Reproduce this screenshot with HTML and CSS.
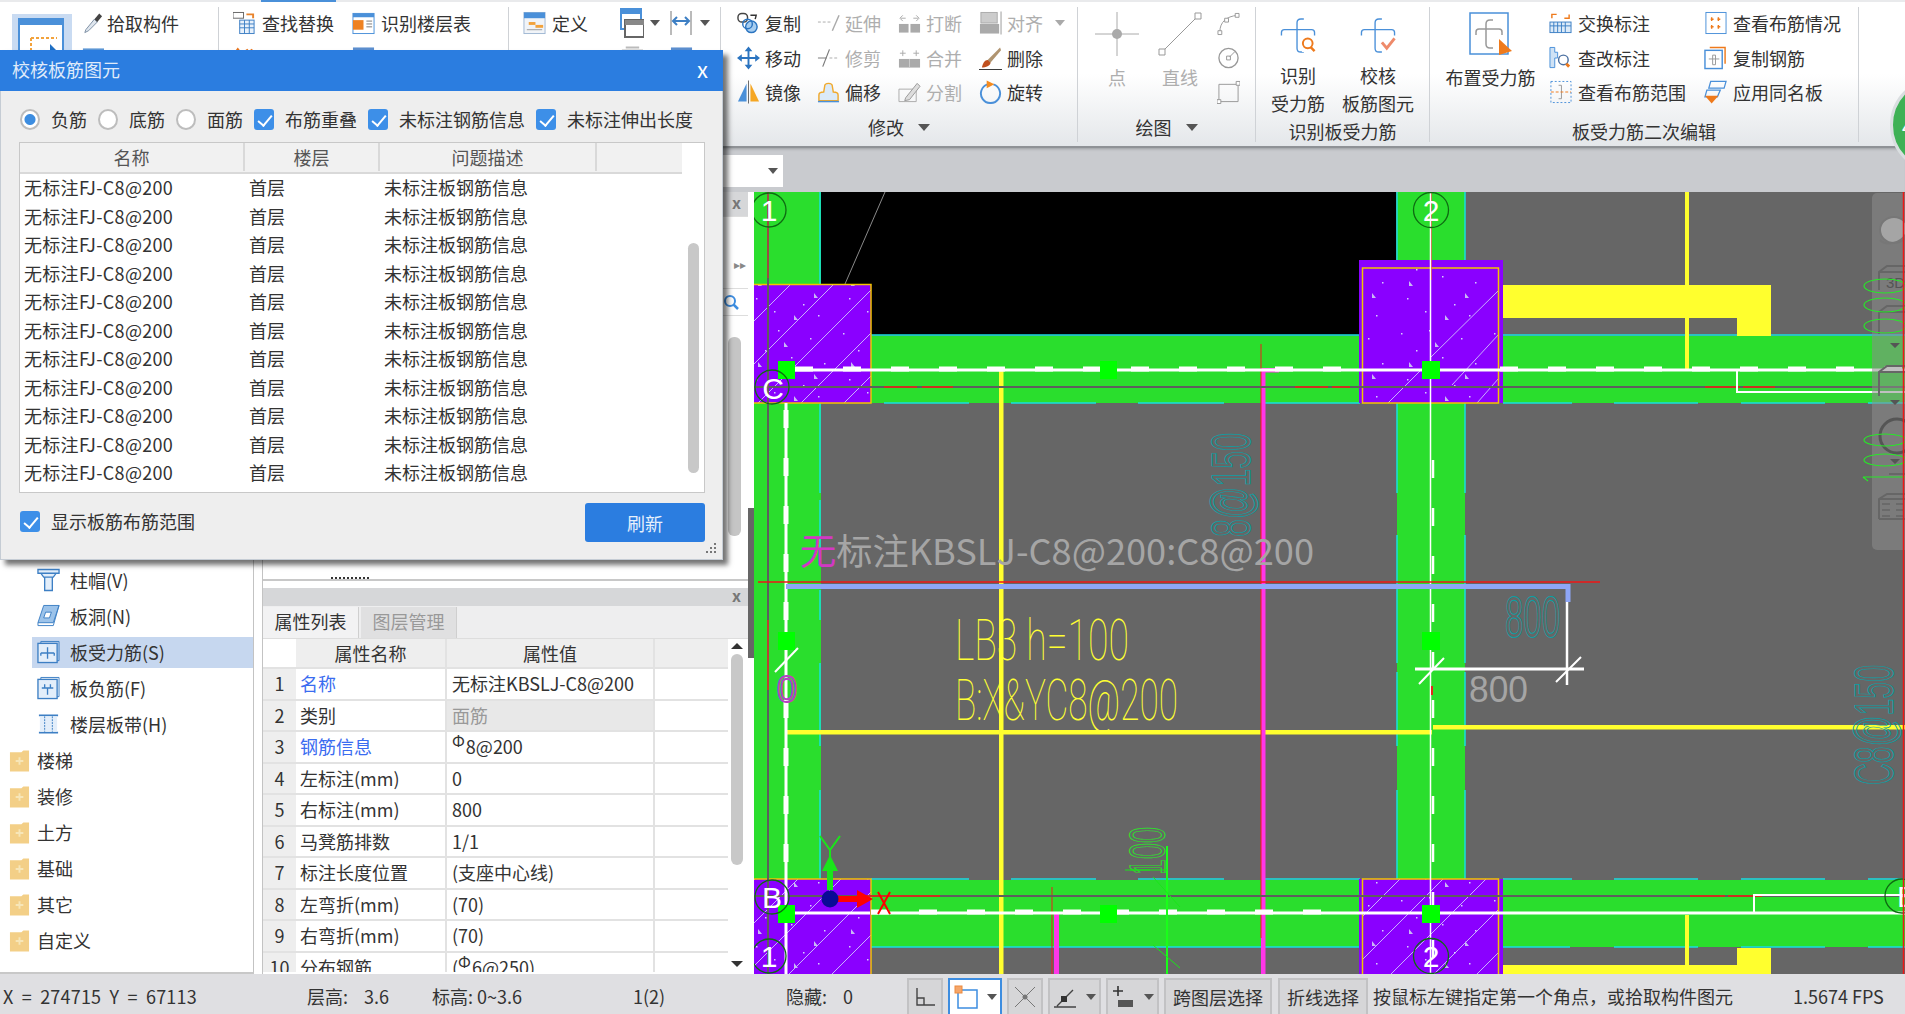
FILE: index.html
```html
<!DOCTYPE html>
<html lang="zh-CN">
<head>
<meta charset="utf-8">
<title>校核板筋图元</title>
<link rel="stylesheet" href="styles.css">
</head>
<body>
<div class="app">

  <header class="ribbon">
    <section class="rb-group g0">
      <div class="rb-body g0-body">
        <div class="tile-active">
          <svg class="tile-svg" viewBox="0 0 60 40"><rect x="7" y="5" width="44" height="50" fill="#fff" stroke="#4a90d9" stroke-width="2"/><rect x="7" y="5" width="44" height="6" fill="#4a90d9"/><path d="M19 24V50M19 24H45" fill="none" stroke="#f2a23c" stroke-width="2" stroke-dasharray="3 2"/><path d="M38 30L50 42V50H38Z" fill="#1f6fc4"/></svg>
        </div>
        <div class="g0-col">
          <div class="rb-item"><svg class="ic" viewBox="0 0 24 24"><path d="M5 19L14 8l3 3-9 9-4 2z" fill="#dfe6ee" stroke="#7c8ea3"/><path d="M14 8l5-6 3 3-5 6z" fill="#444"/></svg><span>拾取构件</span></div>
          <div class="rb-item"><svg class="ic" viewBox="0 0 24 24"><rect x="2" y="2" width="22" height="18" fill="#5c97d6"/></svg></div>
        </div>
      </div>
    </section>
    <section class="rb-group g1">
      <div class="rb-body g1-body">
        <div class="rb-item"><svg class="ic" viewBox="0 0 24 24"><rect x="7" y="9" width="15" height="14" fill="#e8f1fb" stroke="#3d7fc4"/><path d="M7 13h15M7 17h15M12 9v14M17 9v14" stroke="#3d7fc4"/><rect x="0" y="1" width="11" height="6" fill="#fff" stroke="#666"/><path d="M14 3h7v4" fill="none" stroke="#e8832c" stroke-width="2"/></svg><span>查找替换</span></div>
        <div class="rb-item"><svg class="ic" viewBox="0 0 24 24"><rect x="1" y="2" width="22" height="21" fill="#fff" stroke="#4a90d9"/><rect x="1" y="2" width="22" height="4" fill="#4a90d9"/><rect x="1" y="9" width="11" height="10" fill="#ee8121"/><path d="M15 10h6M15 13h6M15 16h6" stroke="#777"/></svg><span>识别楼层表</span></div>
        <div class="rb-item"><svg class="ic" viewBox="0 0 24 24"><path d="M2 7l3-4 3 4M14 3l3 4 3-4" fill="none" stroke="#e8731c" stroke-width="2.5"/></svg></div>
        <div class="rb-item"><svg class="ic" viewBox="0 0 24 24"><rect x="1" y="1" width="22" height="22" fill="#5c8fcf"/></svg></div>
      </div>
    </section>
    <section class="rb-group g2">
      <div class="rb-body g2-body">
        <div class="rb-item w-def"><svg class="ic" viewBox="0 0 24 24"><rect x="1" y="1" width="22" height="22" fill="#f1f4f8" stroke="#9fb7d3"/><rect x="1" y="1" width="22" height="6" fill="#4a90d9"/><rect x="6" y="11" width="7" height="3" fill="#f2a23c"/><rect x="13" y="14" width="8" height="3" fill="#f2a23c"/><path d="M4 19h16" stroke="#999"/></svg><span>定义</span></div>
        <div class="rb-item w-split"><svg class="ic-w" viewBox="0 0 24 30"><rect x="1" y="1" width="20" height="20" fill="#fff" stroke="#4a90d9" stroke-width="2"/><rect x="1" y="1" width="20" height="5" fill="#4a90d9"/><rect x="5" y="12" width="19" height="17" fill="#fff" stroke="#666" stroke-width="2"/><rect x="5" y="12" width="19" height="5" fill="#888"/></svg><i class="caret"></i></div>
        <div class="rb-item"><svg class="ic-w" viewBox="0 0 24 30"><path d="M1 3v24M21 3v24" stroke="#777"/><path d="M4 13h14M7 9l-4 4 4 4M15 9l4 4-4 4" fill="none" stroke="#3d7fc4" stroke-width="2"/></svg><i class="caret"></i></div>
        <div class="rb-item w-def"></div>
        <div class="rb-item w-split"><svg class="ic" viewBox="0 0 24 24"><path d="M2 4h22M6 1h14" stroke="#bbb" stroke-width="2"/></svg></div>
        <div class="rb-item"><svg class="ic" viewBox="0 0 24 24"><rect x="1" y="1" width="22" height="23" fill="#5c8fcf"/></svg></div>
      </div>
    </section>
    <section class="rb-group g3">
      <div class="rb-body g3-body">
        <div class="rb-item"><svg class="ic" viewBox="0 0 24 24"><rect x="1" y="2" width="10" height="9" rx="4" fill="none" stroke="#444" stroke-width="1.5"/><circle cx="15" cy="16" r="6" fill="#a6cdf0" stroke="#2b74c0" stroke-width="1.5"/><circle cx="11" cy="13" r="5" fill="none" stroke="#2b74c0" stroke-width="1.5"/><path d="M14 4h6l-1 4" fill="none" stroke="#333" stroke-width="1.5"/></svg><span>复制</span></div>
        <div class="rb-item off"><svg class="ic" viewBox="0 0 24 24"><path d="M1 11h15" stroke="#aaa" stroke-dasharray="3 2"/><path d="M16 20L23 4" stroke="#aaa" stroke-width="1.5"/></svg><span>延伸</span></div>
        <div class="rb-item off"><svg class="ic" viewBox="0 0 24 24"><rect x="1" y="13" width="10" height="9" fill="#aaa"/><rect x="13" y="13" width="10" height="9" fill="#aaa"/><path d="M3 7h5M5 4l-3 3 3 3M16 7h5M19 4l3 3-3 3" fill="none" stroke="#aaa"/></svg><span>打断</span></div>
        <div class="rb-item off"><svg class="ic" viewBox="0 0 24 24"><rect x="2" y="1" width="17" height="11" fill="#ccc" stroke="#aaa"/><rect x="1" y="13" width="20" height="10" fill="#aaa"/><path d="M23 0v24" stroke="#999"/></svg><span>对齐</span><i class="caret caret--off"></i></div>

        <div class="rb-item"><svg class="ic" viewBox="0 0 24 24"><path d="M12 3v18M3 12h18" stroke="#2b74c0" stroke-width="2"/><path d="M12 0l4 5H8zM12 24l4-5H8zM0 12l5-4v8zM24 12l-5-4v8z" fill="#2b74c0"/></svg><span>移动</span></div>
        <div class="rb-item off"><svg class="ic" viewBox="0 0 24 24"><path d="M1 12h9" stroke="#777"/><path d="M6 21L13 3" stroke="#777" stroke-width="1.2"/><path d="M13 12h10" stroke="#aaa" stroke-dasharray="3 2"/></svg><span>修剪</span></div>
        <div class="rb-item off"><svg class="ic" viewBox="0 0 24 24"><rect x="1" y="13" width="22" height="9" fill="#aaa"/><path d="M12 13v9" stroke="#ccc"/><path d="M2 7h6M5 4v6M16 7h6M19 4v6" stroke="#aaa"/></svg><span>合并</span></div>
        <div class="rb-item"><svg class="ic" viewBox="0 0 24 24"><path d="M8 15L22 1l1 3L11 18z" fill="#b09470"/><path d="M3 22c1-5 3-8 6-8l3 3c0 3-5 5-9 5z" fill="#c0501f"/><path d="M0 24h24" stroke="#333"/></svg><span>删除</span></div>

        <div class="rb-item"><svg class="ic" viewBox="0 0 24 24"><path d="M1 22L10 3v19z" fill="#4a90d9"/><path d="M14 3l9 19h-9z" fill="#f5a623"/><path d="M12 0v24" stroke="#666"/></svg><span>镜像</span></div>
        <div class="rb-item"><svg class="ic" viewBox="0 0 24 24"><path d="M2 21v-6c0-2 2-3 5-3l1-6c0-4 8-4 8 0l1 6c3 0 5 1 5 3v6z" fill="#dbeaf8" stroke="#f0a92c" stroke-width="1.5"/><path d="M1 22h22" stroke="#4a90d9" stroke-width="1.5"/></svg><span>偏移</span></div>
        <div class="rb-item off"><svg class="ic" viewBox="0 0 24 24"><path d="M1 9h18v13H1z" fill="none" stroke="#aaa"/><path d="M8 18L20 3l3 3-11 14-5 1z" fill="#ddd" stroke="#999"/></svg><span>分割</span></div>
        <div class="rb-item"><svg class="ic" viewBox="0 0 24 24"><path d="M15 4a10 10 0 1 1-6 0" fill="none" stroke="#4a90d9" stroke-width="2"/><path d="M8 0l8 4-8 4z" fill="#f58b1f"/></svg><span>旋转</span></div>
      </div>
      <div class="rb-label"><span>修改</span><i class="caret caret--label"></i></div>
    </section>
    <section class="rb-group g4">
      <div class="rb-body g4-body">
        <div class="big big--pt off"><svg class="ic-big" viewBox="0 0 44 44"><path d="M22 0v44M0 22h44" stroke="#aaa"/><circle cx="22" cy="22" r="5" fill="#aaa"/></svg><span>点</span></div>
        <div class="big big--line off"><svg class="ic-big" viewBox="0 0 44 44"><path d="M4 40L40 4" stroke="#999"/><path d="M1 37h6v6H1zM37 1h6v6h-6z" fill="#fff" stroke="#999"/></svg><span>直线</span></div>
        <div class="minis">
          <svg class="ic" viewBox="0 0 24 24"><path d="M3 20C3 10 10 4 21 3" fill="none" stroke="#999"/><path d="M1 19h4v4H1zM19 1h4v4h-4zM8 6h4v4H8z" fill="#fff" stroke="#999"/></svg>
          <svg class="ic" viewBox="0 0 24 24"><circle cx="12" cy="12" r="10" fill="none" stroke="#999" stroke-width="1.4"/><path d="M10 10h4v4h-4z" fill="#fff" stroke="#999"/><path d="M13 11l6-6" stroke="#999"/></svg>
          <svg class="ic" viewBox="0 0 24 24"><path d="M2 4h20v18H2z" fill="none" stroke="#999"/><path d="M0 20h4v4H0zM20 1h4v4h-4z" fill="#fff" stroke="#999"/></svg>
        </div>
      </div>
      <div class="rb-label"><span>绘图</span><i class="caret caret--label"></i></div>
    </section>
    <section class="rb-group g5">
      <div class="rb-body g5-body">
        <div class="big big--rec"><svg class="ic-rec" viewBox="0 0 40 38"><path d="M26 2h-3c-3 0-4 1-4 4v26c0 3 1 4 4 4h3M3 19v-3c0-2 1-3 3-3h28c2 0 3 1 3 3v3" fill="none" stroke="#4a90d9" stroke-width="1.4"/><rect x="24" y="21" width="16" height="15" fill="#fff"/><circle cx="30" cy="27" r="5" fill="none" stroke="#ee7a1c" stroke-width="2"/><path d="M33 31l4 4" stroke="#ee7a1c" stroke-width="2.5"/></svg><span>识别<br>受力筋</span></div>
        <div class="big big--chk"><svg class="ic-rec" viewBox="0 0 40 38"><path d="M24 2h-3c-3 0-4 1-4 4v26c0 3 1 4 4 4h3M3 19v-3c0-2 1-3 3-3h28c2 0 3 1 3 3v3" fill="none" stroke="#4a90d9" stroke-width="1.4"/><path d="M24 26l5 6 8-10" fill="none" stroke="#ee8a6a" stroke-width="3"/></svg><span>校核<br>板筋图元</span></div>
      </div>
      <div class="rb-label rb-label--low"><span>识别板受力筋</span></div>
    </section>
    <section class="rb-group g6">
      <div class="rb-body g6-body">
        <div class="big big--set"><svg class="ic-set" viewBox="0 0 44 44"><rect x="1" y="1" width="38" height="41" fill="#fff" stroke="#4a90d9" stroke-width="1.5"/><path d="M24 8h-3c-3 0-4 1-4 4v20c0 3 1 4 4 4h3M7 23v-3c0-2 1-3 3-3h20c2 0 3 1 3 3v3" fill="none" stroke="#999" stroke-width="1.5"/><path d="M30 27l13 12-13 4z" fill="#ee7a1c"/></svg><span>布置受力筋</span></div>
        <div class="g6-grid">
          <div class="rb-item"><svg class="ic" viewBox="0 0 24 24"><rect x="1" y="11" width="22" height="11" fill="#dbeaf8" stroke="#3d7fc4"/><path d="M5 11v11M9 11v11M13 11v11M17 11v11M1 15h22" stroke="#3d7fc4"/><path d="M3 7V3h5M21 3v4h-5" fill="none" stroke="#ee7a1c" stroke-width="1.5"/></svg><span>交换标注</span></div>
          <div class="rb-item"><svg class="ic" viewBox="0 0 24 24"><rect x="2" y="1" width="21" height="22" fill="#fff" stroke="#4a90d9"/><path d="M7 8h3M14 8h3M7 16h3M14 16h3M8 6v4M15 6v4M8 14v4M15 14v4" stroke="#ee7a1c" stroke-width="1.5"/></svg><span>查看布筋情况</span></div>
          <div class="rb-item"><svg class="ic" viewBox="0 0 24 24"><path d="M1 1h5v5h3v6H6v10H1z" fill="#cfe2f5" stroke="#4a90d9"/><circle cx="15" cy="14" r="5" fill="#fff" stroke="#4a6fa0" stroke-width="1.5"/><path d="M18 18l3 3" stroke="#ee7a1c" stroke-width="3"/></svg><span>查改标注</span></div>
          <div class="rb-item"><svg class="ic" viewBox="0 0 24 24"><path d="M6 1h16v17" fill="none" stroke="#ee7a1c" stroke-width="1.5"/><rect x="1" y="4" width="18" height="19" fill="#fff" stroke="#4a90d9" stroke-width="1.5"/><path d="M9 9h3v10H9zM5 13h11" fill="none" stroke="#999"/></svg><span>复制钢筋</span></div>
          <div class="rb-item"><svg class="ic" viewBox="0 0 24 24"><rect x="2" y="1" width="21" height="22" fill="none" stroke="#4a90d9" stroke-dasharray="2 2"/><path d="M10 5h3v14h-3" fill="none" stroke="#999"/><path d="M2 12h21" stroke="#ee7a1c" stroke-dasharray="3 2"/></svg><span>查看布筋范围</span></div>
          <div class="rb-item"><svg class="ic" viewBox="0 0 24 24"><path d="M7 1h16l-2 7H5zM3 10h14l-3 7H1z" fill="none" stroke="#4a90d9" stroke-width="1.3"/><path d="M1 16h14l-7 8z" fill="#ee7a1c"/></svg><span>应用同名板</span></div>
        </div>
      </div>
      <div class="rb-label rb-label--low"><span>板受力筋二次编辑</span></div>
    </section>
  </header>

  <div class="toolstrip">
    <div class="combo"><i class="caret"></i></div>
  </div>

  <main class="work">
    <nav class="tree">
      <div class="tree-row child"><svg class="ic" viewBox="0 0 24 24"><path d="M1 1h22v4H1zM4 5h16l-3 4H7zM8 9h8v14H8z" fill="#e3eefa" stroke="#3d7fc4" stroke-width="1.4"/></svg><span>柱帽(V)</span></div>
      <div class="tree-row child"><svg class="ic" viewBox="0 0 24 24"><path d="M7 1h16l-6 18H1z" fill="#9cc3ea" stroke="#3d7fc4"/><path d="M9 8h6l-2 6H7z" fill="#fff" stroke="#3d7fc4"/><path d="M1 19v3h16l6-21" fill="none" stroke="#3d7fc4"/></svg><span>板洞(N)</span></div>
      <div class="tree-row child selected"><svg class="ic" viewBox="0 0 24 24"><rect x="1" y="3" width="20" height="20" fill="#e3eefa" stroke="#3d7fc4" stroke-width="1.4"/><path d="M4 3V1h19v20h-2" fill="none" stroke="#3d7fc4"/><path d="M11 7v12M4 13h14M4 13v3M18 13v3" fill="none" stroke="#3d7fc4" stroke-width="1.4"/></svg><span>板受力筋(S)</span></div>
      <div class="tree-row child"><svg class="ic" viewBox="0 0 24 24"><rect x="1" y="3" width="20" height="20" fill="#e3eefa" stroke="#3d7fc4" stroke-width="1.4"/><path d="M4 3V1h19v20h-2" fill="none" stroke="#3d7fc4"/><path d="M6 12h11M8 8v4h-3M14 8v4h3M11 12v7" fill="none" stroke="#3d7fc4" stroke-width="1.4"/></svg><span>板负筋(F)</span></div>
      <div class="tree-row child"><svg class="ic" viewBox="0 0 24 24"><path d="M2 3h20M2 21h20" stroke="#3d7fc4" stroke-width="2"/><rect x="3" y="4" width="18" height="16" fill="#e3eefa"/><path d="M8 4v16M16 4v16" stroke="#3d7fc4" stroke-dasharray="2 1"/></svg><span>楼层板带(H)</span></div>
      <div class="tree-row"><svg class="ic folder" viewBox="0 0 22 24"><path d="M1 4h12l2-2h6v22H1z" fill="#f3cf87"/><path d="M7 13h8M11 9v8" stroke="#f7e6b8" stroke-width="2"/></svg><span>楼梯</span></div>
      <div class="tree-row"><svg class="ic folder" viewBox="0 0 22 24"><path d="M1 4h12l2-2h6v22H1z" fill="#f3cf87"/><path d="M7 13h8M11 9v8" stroke="#f7e6b8" stroke-width="2"/></svg><span>装修</span></div>
      <div class="tree-row"><svg class="ic folder" viewBox="0 0 22 24"><path d="M1 4h12l2-2h6v22H1z" fill="#f3cf87"/><path d="M7 13h8M11 9v8" stroke="#f7e6b8" stroke-width="2"/></svg><span>土方</span></div>
      <div class="tree-row"><svg class="ic folder" viewBox="0 0 22 24"><path d="M1 4h12l2-2h6v22H1z" fill="#f3cf87"/><path d="M7 13h8M11 9v8" stroke="#f7e6b8" stroke-width="2"/></svg><span>基础</span></div>
      <div class="tree-row"><svg class="ic folder" viewBox="0 0 22 24"><path d="M1 4h12l2-2h6v22H1z" fill="#f3cf87"/><path d="M7 13h8M11 9v8" stroke="#f7e6b8" stroke-width="2"/></svg><span>其它</span></div>
      <div class="tree-row"><svg class="ic folder" viewBox="0 0 22 24"><path d="M1 4h12l2-2h6v22H1z" fill="#f3cf87"/><path d="M7 13h8M11 9v8" stroke="#f7e6b8" stroke-width="2"/></svg><span>自定义</span></div>
    </nav>

    <div class="mid">
      <section class="list-panel">
        <div class="panel-head"><span class="panel-x">x</span></div>
        <div class="list-tools"><span class="chev">▸▸</span></div>
        <div class="list-search"><svg class="search" viewBox="0 0 16 16"><circle cx="7" cy="7" r="5" fill="none" stroke="#3d8de0" stroke-width="2"/><path d="M10.5 10.5L15 15" stroke="#3d8de0" stroke-width="2.5"/></svg></div>
        <div class="list-body">
          <div class="list-thumb"></div>
          <div class="list-stub"><i class="stub-bit"></i></div>
        </div>
      </section>
      <section class="prop-panel">
        <div class="panel-head panel-head--prop"><span class="panel-x">x</span></div>
        <div class="tabs"><div class="tab tab--on">属性列表</div><div class="tab">图层管理</div></div>
        <div class="prop-body">
          <div class="prop-table">
            <div class="prop-row prop-head"><div class="c0"></div><div class="c1">属性名称</div><div class="c2">属性值</div></div>
            <div class="prop-row"><div class="c0">1</div><div class="c1 link">名称</div><div class="c2">无标注KBSLJ-C8@200</div></div>
            <div class="prop-row"><div class="c0">2</div><div class="c1">类别</div><div class="c2 locked">面筋</div></div>
            <div class="prop-row"><div class="c0">3</div><div class="c1 link">钢筋信息</div><div class="c2"><sup class="rebar">Φ</sup>8@200</div></div>
            <div class="prop-row"><div class="c0">4</div><div class="c1">左标注(mm)</div><div class="c2">0</div></div>
            <div class="prop-row"><div class="c0">5</div><div class="c1">右标注(mm)</div><div class="c2">800</div></div>
            <div class="prop-row"><div class="c0">6</div><div class="c1">马凳筋排数</div><div class="c2">1/1</div></div>
            <div class="prop-row"><div class="c0">7</div><div class="c1">标注长度位置</div><div class="c2">(支座中心线)</div></div>
            <div class="prop-row"><div class="c0">8</div><div class="c1">左弯折(mm)</div><div class="c2">(70)</div></div>
            <div class="prop-row"><div class="c0">9</div><div class="c1">右弯折(mm)</div><div class="c2">(70)</div></div>
            <div class="prop-row"><div class="c0">10</div><div class="c1">分布钢筋</div><div class="c2">(<sup class="rebar">Φ</sup>6@250)</div></div>
          </div>
          <div class="prop-scroll"><i class="arrow-up"></i><div class="prop-thumb"></div><i class="arrow-down"></i></div>
        </div>
      </section>
    </div>

    <div class="splitter"><div class="splitter-grip"></div></div>

    <div class="canvas">
      <svg class="cad" viewBox="754 192 1151 782">
        <defs>
          <pattern id="hatch" patternUnits="userSpaceOnUse" width="43" height="43"><path d="M43 0L0 43" stroke="#c9b0ff" stroke-width="1"/></pattern>
          <pattern id="dots" patternUnits="userSpaceOnUse" width="93" height="81">
            <path d="M6 9h1.5v1.5H6zM21 26h1.5v1.5H21zM34 6h1.5v1.5H34zM47 33h1.5v1.5H47zM66 14h1.5v1.5H66zM80 39h1.5v1.5H80zM12 55h1.5v1.5H12zM30 68h1.5v1.5H30zM59 61h1.5v1.5H59zM74 72h1.5v1.5H74z" fill="#d8ccff"/>
            <path d="M40 18l4 5h-4zM14 38l4 5h-4zM70 50l4 5h-4zM50 72l4 5h-4z" fill="#c9b8f5"/>
          </pattern>
        </defs>
        <rect x="754" y="192" width="1151" height="782" fill="#666"/>
        <rect x="821" y="192" width="575" height="143" fill="#000"/>
        <path d="M845 284L885 192" stroke="#8a8a8a" stroke-width="1"/>

        <!-- beams -->
        <rect x="754" y="192" width="67" height="782" fill="#2ade2d"/>
        <rect x="1397" y="192" width="68" height="782" fill="#2ade2d"/>
        <rect x="754" y="336" width="1151" height="67" fill="#2ade2d"/>
        <rect x="754" y="880" width="1151" height="67" fill="#2ade2d"/>

        <!-- cyan edges -->
        <g stroke="#17dfdf" stroke-width="1.5" fill="none">
          <path d="M871 335H1396M1503 335H1905" />
          <path d="M820 192V493M820 500V560" />
          <path d="M820 590V620M820 663V746M820 790V880" />
          <path d="M884 403H969M1011 403H1096M1138 403H1224M1263 403H1360M1503 403H1572M1614 403H1698M1741 403H1825M1868 403H1905"/>
          <path d="M871 879H969M1011 879H1096M1138 879H1224M1263 879H1360M1503 879H1572M1614 879H1698M1741 879H1825M1868 879H1905"/>
          <path d="M871 947H1360M1503 947H1570M1614 947H1698M1741 947H1825M1868 947H1905"/>
          <path d="M1397 192V493M1397 535V663M1397 672V746M1397 790V880"/>
          <path d="M1465 192V493M1465 535V663M1465 672V746M1465 790V880"/>
        </g>

        <!-- yellow -->
        <g fill="#ffff2e">
          <path d="M1503 285H1771V336H1737V318H1503Z"/>
          <path d="M1503 965H1737V948H1771V974H1503Z"/>
          <rect x="1685" y="192" width="4" height="177"/>
          <rect x="1685" y="915" width="4" height="50"/>
          <rect x="999" y="371" width="4.5" height="603"/>
          <rect x="786" y="730" width="646" height="4.5"/>
          <rect x="1433" y="725" width="472" height="4.5"/>
        </g>

        <!-- magenta / red verticals -->
        <g>
          <rect x="1261" y="370" width="4.5" height="604" fill="#ff36e8"/>
          <rect x="1261" y="368" width="18" height="4.5" fill="#ff36e8"/>
          <rect x="1054" y="912" width="5" height="62" fill="#ff36e8"/>
          <path d="M1261 344V938M1052 887V974" stroke="#ef1d1d" stroke-width="1"/>
        </g>

        <!-- columns -->
        <g>
          <rect x="754" y="284" width="117" height="119" fill="#8a00ff"/>
          <rect x="1359" y="260" width="144" height="143" fill="#8a00ff"/>
          <rect x="754" y="879" width="117" height="95" fill="#8a00ff"/>
          <rect x="1359" y="879" width="144" height="95" fill="#8a00ff"/>
          <rect x="754" y="284" width="117" height="119" fill="url(#hatch)"/>
          <rect x="754" y="284" width="117" height="119" fill="url(#dots)"/>
          <path d="M1388 403L1431 360M1430 358L1499 290M1452 385L1499 334M1477 403L1499 378" stroke="#c9b0ff" stroke-width="1"/>
          <rect x="1362" y="268" width="137" height="135" fill="url(#dots)"/>
          <rect x="754" y="879" width="117" height="95" fill="url(#hatch)"/>
          <rect x="754" y="879" width="117" height="95" fill="url(#dots)"/>
          <rect x="1362" y="879" width="137" height="95" fill="url(#hatch)"/>
          <rect x="1362" y="879" width="137" height="95" fill="url(#dots)"/>
          <g fill="none" stroke="#f3c400" stroke-width="1.5">
            <path d="M754 284.5H871V403H754"/>
            <rect x="1362.5" y="268" width="136" height="135"/>
            <path d="M754 879H871V974"/>
            <path d="M1362.5 974V879H1498.5V974"/>
          </g>
        </g>

        <!-- axis lines -->
        <g stroke="#5e5e5e" stroke-width="2" fill="none">
          <path d="M754 387H1905"/>
          <path d="M768 192V974"/>
          <path d="M754 896H1150"/>
          <path d="M1150 896H1905"/>
        </g>
        <path d="M884 387H917M922 387H953M1295 387H1328M1332 387H1350M1705 387H1740M1743 387H1775" stroke="#f0230e" stroke-width="1.5"/>
        <path d="M866 896H940M1690 896H1725M1728 896H1762" stroke="#f0230e" stroke-width="1.5"/>
        <path d="M768 192V278" stroke="#d9382a" stroke-width="1"/>
        <path d="M1431 192V280" stroke="#e02a1a" stroke-width="1.5"/>

        <!-- white bars -->
        <g stroke="#fff" fill="none">
          <path d="M795 370H1905" stroke-width="3"/>
          <path d="M795 369H1350M1500 369H1905" stroke-width="5" stroke-dasharray="18 30"/>
          <path d="M786 403V974" stroke-width="3"/>
          <path d="M786 410V640M786 700V880" stroke-width="5" stroke-dasharray="18 30"/>
          <path d="M871 913H1905" stroke-width="3"/>
          <path d="M871 912H1340" stroke-width="5" stroke-dasharray="18 30"/>
          <path d="M795 913H870" stroke-width="3"/>
          <path d="M1430.5 192V974" stroke-width="1.5"/>
          <path d="M1433 460V974" stroke-width="2.5" stroke-dasharray="18 30"/>
          <path d="M1737 371V392H1905" stroke-width="2"/>
          <path d="M1754 913V895H1905" stroke-width="2"/>
          <path d="M1567 602V685" stroke-width="2.5"/>
          <path d="M1415 669H1584" stroke-width="3"/>
          <path d="M1419 684L1444 658M1556 682L1581 657" stroke-width="2"/>
          <path d="M775 672L798 648" stroke-width="2"/>
        </g>

        <!-- lavender + red long lines -->
        <path d="M786 586.5H1568V602" fill="none" stroke="#8ea6f6" stroke-width="5"/>
        <path d="M758 582H1600" stroke="#f01616" stroke-width="1.5"/>
        <path d="M768 620V690" stroke="#d9382a" stroke-width="1.5"/>
        <path d="M1432 686V695" stroke="#e02a1a" stroke-width="2"/>

        <!-- green grips -->
        <g fill="#00ff00">
          <rect x="778" y="361" width="17" height="18"/>
          <rect x="1100" y="361" width="17" height="18"/>
          <rect x="1422" y="361" width="18" height="18"/>
          <rect x="778" y="632" width="17" height="18"/>
          <rect x="1422" y="632" width="18" height="18"/>
          <rect x="778" y="905" width="17" height="18"/>
          <rect x="1100" y="905" width="17" height="18"/>
          <rect x="1422" y="905" width="18" height="18"/>
        </g>

        <!-- axis bubbles -->
        <g fill="none" stroke="#0e6b12" stroke-width="1.3">
          <circle cx="769" cy="210" r="17"/>
          <circle cx="1431" cy="210" r="17.5"/>
          <circle cx="772" cy="387" r="17"/>
          <circle cx="772" cy="897" r="17"/>
          <circle cx="769" cy="956" r="17"/>
          <circle cx="1431" cy="956" r="17.5"/>
          <circle cx="1902" cy="896" r="17"/>
        </g>
        <g class="axis-text">
          <text x="769" y="221" >1</text>
          <text x="1431" y="221">2</text>
          <text x="773" y="399">C</text>
          <text x="772" y="908">B</text>
          <text x="769" y="967">1</text>
          <text x="1431" y="967">2</text>
          <text x="1897" y="907" class="t-edge">B</text>
        </g>

        <!-- drawing texts -->
        <text class="t-label" x="800" y="565" textLength="514" lengthAdjust="spacingAndGlyphs"><tspan class="t-mag">无</tspan>标注KBSLJ-C8@200:C8@200</text>
        <text class="t-yellow" x="955" y="660" textLength="174" lengthAdjust="spacingAndGlyphs">LB3 h=100</text>
        <text class="t-yellow" x="955" y="720" textLength="223" lengthAdjust="spacingAndGlyphs">B:X&amp;YC8@200</text>
        <text class="t-grey" x="1469" y="702" textLength="59" lengthAdjust="spacingAndGlyphs">800</text>
        <text class="t-teal" x="1505" y="637" textLength="55" lengthAdjust="spacingAndGlyphs">800</text>
        <text class="t-teal t-teal--v" transform="translate(1250 537) rotate(-90)" textLength="104" lengthAdjust="spacingAndGlyphs">8@150</text>
        <text class="t-teal t-teal--v" transform="translate(1893 785) rotate(-90)" textLength="120" lengthAdjust="spacingAndGlyphs">C8@150</text>
        <text class="t-green" transform="translate(1165 875) rotate(-90)" textLength="48" lengthAdjust="spacingAndGlyphs">100</text>
        <text class="t-purple" x="787" y="702" text-anchor="middle">0</text>

        <!-- green dim lines -->
        <path d="M1167 846V974" stroke="#19ff19" stroke-width="2"/>
        <path d="M1153 877L1180 907M1153 945L1180 968M1125 870H1167M1130 870L1150 870" stroke="#19e619" stroke-width="1" fill="none"/>

        <!-- origin -->
        <path d="M830 890V870" stroke="#19e619" stroke-width="6"/>
        <path d="M830 855l-8 16h16z" fill="#19e619"/>
        <path d="M820 836l10 14 10-14M830 850v10" fill="none" stroke="#19e619" stroke-width="2"/>
        <path d="M838 899H860" stroke="#f00" stroke-width="6"/>
        <path d="M857 890l16 9-16 9z" fill="#f00"/>
        <circle cx="830" cy="899" r="8.5" fill="#0a0a96"/>
        <path d="M878 892l12 22M890 892l-12 22" stroke="#f00" stroke-width="2"/>

        <!-- right floating toolbar -->
        <rect x="1872" y="193" width="40" height="357" rx="5" fill="#8d8d8d" fill-opacity=".55"/>
        <g fill="none" stroke="#4d4d4d" stroke-width="2">
          <ellipse cx="1894" cy="230" rx="14" ry="13" fill="#a5a5a5" stroke="#777"/>
          <path d="M1880 240c6 6 20 4 26-6" stroke="#777"/>
          <path d="M1879 290V272l8-6h18M1879 272h26" stroke="#666"/>
          <path d="M1879 334V312l8-6h18M1879 312h26" stroke="#666"/>
          <path d="M1879 396V372l8-6h18M1879 372h26" stroke="#666" />
          <circle cx="1897" cy="436" r="17" stroke="#555" stroke-width="3"/>
          <path d="M1879 519V499l8-5h18M1879 519h26M1879 499h26" stroke="#666"/>
          <path d="M1882 504h8M1882 510h8M1882 516h8M1896 504h8M1896 510h8M1896 516h8" stroke="#666" stroke-width="1.5"/>
        </g>
        <path d="M1890 343h10l-5 5zM1890 459h10l-5 5zM1890 400h10l-5 5z" fill="#555"/>
        <text class="t-3d" x="1886" y="288">3D</text>
        <path d="M1889 474H1905" stroke="#555"/>
        <g fill="none" stroke="#29e629" stroke-width="1.2">
          <ellipse cx="1885" cy="286" rx="21" ry="7"/>
          <ellipse cx="1885" cy="305" rx="21" ry="7"/>
          <ellipse cx="1885" cy="326" rx="21" ry="7"/>
          <ellipse cx="1885" cy="440" rx="21" ry="6"/>
          <ellipse cx="1885" cy="460" rx="21" ry="6"/>
          <path d="M1863 477H1905M1863 477l5 4"/>
        </g>
        <path d="M1903.5 192V974" stroke="#f01616" stroke-width="1.5"/>
      </svg>
    </div>
  </main>

  <footer class="status">
    <span class="st st-xy">X = 274715 Y = 67113</span>
    <span class="st st-h"><span class="st-k">层高:</span>3.6</span>
    <span class="st st-e">标高: 0~3.6</span>
    <span class="st st-f">1(2)</span>
    <span class="st st-v"><span class="st-k">隐藏:</span>0</span>
    <button class="sb sb-a"><svg class="sb-ic" viewBox="0 0 24 24"><path d="M4 3v17h18M4 13h7v7" fill="none" stroke="#444" stroke-width="1.4"/></svg></button>
    <button class="sb sb-b sb--on"><svg class="sb-ic" viewBox="0 0 24 24"><rect x="4" y="5" width="19" height="18" fill="none" stroke="#3d8de0" stroke-width="1.5"/><rect x="1" y="1" width="7" height="7" fill="#f5a66a" stroke="#ec8a3e"/></svg><i class="caret"></i></button>
    <button class="sb sb-a"><svg class="sb-ic" viewBox="0 0 24 24"><path d="M2 2l20 20M22 2L2 22" stroke="#777"/><circle cx="12" cy="12" r="2.5" fill="#777"/></svg></button>
    <button class="sb sb-c"><svg class="sb-ic" viewBox="0 0 24 24"><path d="M1 22h22M4 21L20 5" stroke="#444" stroke-width="1.4"/><rect x="8" y="11" width="6" height="6" fill="#333"/></svg><i class="caret"></i></button>
    <button class="sb sb-c"><svg class="sb-ic" viewBox="0 0 24 24"><path d="M2 6h10M7 1v10" stroke="#333" stroke-width="1.6"/><rect x="7" y="15" width="15" height="7" fill="#555"/></svg><i class="caret"></i></button>
    <button class="sb sb-t1">跨图层选择</button>
    <button class="sb sb-t2">折线选择</button>
    <span class="st st-msg">按鼠标左键指定第一个角点，或拾取构件图元</span>
    <span class="st st-fps">1.5674 FPS</span>
  </footer>

  <div class="badge"><span>4</span></div>

  <aside class="dialog">
    <div class="dlg-title"><span>校核板筋图元</span><span class="dlg-close">x</span></div>
    <div class="dlg-opts">
      <i class="radio radio--on"></i><span>负筋</span>
      <i class="radio"></i><span>底筋</span>
      <i class="radio"></i><span>面筋</span>
      <i class="check"></i><span>布筋重叠</span>
      <i class="check"></i><span>未标注钢筋信息</span>
      <i class="check"></i><span>未标注伸出长度</span>
    </div>
    <div class="dlg-table">
      <div class="dt-head"><div class="dh dh1">名称</div><div class="dh dh2">楼层</div><div class="dh dh3">问题描述</div></div>
      <div class="dt-body">
        <div class="dt-rows">
          <div class="dt-row"><span class="d1">无标注FJ-C8@200</span><span class="d2">首层</span><span>未标注板钢筋信息</span></div>
          <div class="dt-row"><span class="d1">无标注FJ-C8@200</span><span class="d2">首层</span><span>未标注板钢筋信息</span></div>
          <div class="dt-row"><span class="d1">无标注FJ-C8@200</span><span class="d2">首层</span><span>未标注板钢筋信息</span></div>
          <div class="dt-row"><span class="d1">无标注FJ-C8@200</span><span class="d2">首层</span><span>未标注板钢筋信息</span></div>
          <div class="dt-row"><span class="d1">无标注FJ-C8@200</span><span class="d2">首层</span><span>未标注板钢筋信息</span></div>
          <div class="dt-row"><span class="d1">无标注FJ-C8@200</span><span class="d2">首层</span><span>未标注板钢筋信息</span></div>
          <div class="dt-row"><span class="d1">无标注FJ-C8@200</span><span class="d2">首层</span><span>未标注板钢筋信息</span></div>
          <div class="dt-row"><span class="d1">无标注FJ-C8@200</span><span class="d2">首层</span><span>未标注板钢筋信息</span></div>
          <div class="dt-row"><span class="d1">无标注FJ-C8@200</span><span class="d2">首层</span><span>未标注板钢筋信息</span></div>
          <div class="dt-row"><span class="d1">无标注FJ-C8@200</span><span class="d2">首层</span><span>未标注板钢筋信息</span></div>
          <div class="dt-row"><span class="d1">无标注FJ-C8@200</span><span class="d2">首层</span><span>未标注板钢筋信息</span></div>
        </div>
        <div class="dt-thumb"></div>
      </div>
    </div>
    <div class="dlg-foot">
      <i class="check check--foot"></i><span class="foot-label">显示板筋布筋范围</span>
      <button class="btn-refresh">刷新</button>
    </div>
    <svg class="grip" viewBox="0 0 12 12"><path d="M9 1h2v2H9zM5 5h2v2H5zM9 5h2v2H9zM1 9h2v2H1zM5 9h2v2H5zM9 9h2v2H9z" fill="#777"/></svg>
  </aside>
</div>
</body>
</html>
```

FILE: styles.css
```css
* { box-sizing: border-box; }
html, body { margin: 0; height: 100%; overflow: hidden; }
body {
  font-family: "Noto Sans CJK SC", "Noto Sans", sans-serif;
  font-size: 18px;
  color: #333;
}
i { display: block; font-style: normal; }
.app {
  position: relative;
  width: 1905px;
  height: 1014px;
  overflow: hidden;
  display: flex;
  flex-direction: column;
  background: #fff;
}

/* ribbon */
.ribbon {
  position: relative;
  height: 148px;
  flex: none;
  display: flex;
  padding: 5px 0 6px;
  background: linear-gradient(#fff 0, #fff 50%, #e4e7ea 100%);
  border-top: 2px solid #e9eaec;
  border-bottom: 2px solid #8f9296;
}
.ribbon::before {
  content: "";
  position: absolute;
  left: 261px;
  top: -2px;
  width: 75px;
  height: 2px;
  background: #4a90d9;
}
.rb-group {
  display: flex;
  flex-direction: column;
  height: 135px;
  border-right: 1px solid #cfd2d6;
  flex: none;
}
.g0 { width: 219px; }
.g1 { width: 290px; }
.g2 { width: 212px; }
.g3 { width: 357px; }
.g4 { width: 178px; }
.g5 { width: 174px; }
.g6 { width: 429px; }
.rb-body { flex: 1; min-height: 0; margin-top: -1px; }
.rb-label {
  height: 29px;
  flex: none;
  display: flex;
  align-items: center;
  justify-content: center;
  gap: 14px;
  line-height: 22px;
  padding-bottom: 1px;
}
.rb-label--low { padding-bottom: 0; padding-top: 6px; }
.rb-item {
  display: flex;
  align-items: center;
  gap: 6px;
  height: 34.5px;
  white-space: nowrap;
  font-size: 18px;
}
.off { color: #aeaeae; }
.ic { width: 23px; height: 24px; flex: none; display: block; }
.ic-w { width: 24px; height: 30px; flex: none; display: block; }
.caret {
  width: 0; height: 0;
  border-left: 5px solid transparent;
  border-right: 5px solid transparent;
  border-top: 6px solid #555;
  flex: none;
}
.caret--off { border-top-color: #aaa; margin-left: 7px; }
.caret--label { border-left-width: 6px; border-right-width: 6px; border-top-width: 7px; }

.g0-body { display: flex; padding-left: 12px; }
.tile-active {
  width: 60px;
  height: 48px;
  margin-top: 8px;
  background: #c9dbf2;
  overflow: hidden;
}
.tile-svg { width: 60px; height: 40px; display: block; }
.g0-col { margin-left: 9px; }
.g0-col .rb-item { gap: 3px; }
.g1-body { display: grid; grid-template-columns: 119px 1fr; align-content: start; padding-left: 14px; }
.g2-body { display: grid; grid-template-columns: 97px 50px 1fr; align-content: start; padding-left: 14px; }
.g3-body { display: grid; grid-template-columns: 80px 81px 81px 1fr; align-content: start; padding-left: 16px; }
.g3-body .rb-item { gap: 5px; }
.g4-body { display: flex; }
.big {
  display: flex;
  flex-direction: column;
  align-items: center;
  text-align: center;
  line-height: 28px;
  white-space: nowrap;
}
.big--pt { width: 78px; }
.big--line { width: 48px; }
.ic-big { width: 44px; height: 44px; margin: 6px 0 7px; display: block; flex: none; }
.minis { margin-left: 13px; padding-top: 6px; display: flex; flex-direction: column; gap: 10px; }
.g5-body { display: flex; }
.big--rec { width: 84px; }
.big--chk { width: 76px; }
.ic-rec { width: 40px; height: 37px; margin: 11px 0 7px; display: block; flex: none; }
.g6-body { display: flex; padding-left: 2px; }
.big--set { width: 117px; }
.ic-set { width: 44px; height: 44px; margin: 6px 0 7px; display: block; flex: none; }
.g6-grid { display: grid; grid-template-columns: 155px 1fr; align-content: start; }

/* tool strip */
.toolstrip {
  height: 44px;
  flex: none;
  background: #c9cbcf;
  padding: 7px 0 0 600px;
  box-shadow: inset 0 3px 3px -2px #9a9ca0;
}
.combo {
  width: 183px;
  height: 32px;
  background: #fff;
  display: flex;
  align-items: center;
  justify-content: flex-end;
  padding-right: 5px;
}

/* main */
.work { flex: 1; min-height: 0; display: flex; background: #fff; }
.tree {
  width: 254px;
  flex: none;
  display: flex;
  flex-direction: column;
  justify-content: flex-end;
  padding-bottom: 14px;
  border-right: 1px solid #c3c3c3;
  border-bottom: 2px solid #c8c8c8;
}
.tree-row {
  height: 36px;
  display: flex;
  align-items: center;
  gap: 7px;
  padding-left: 9px;
  flex: none;
  white-space: nowrap;
}
.tree-row.child { margin-left: 32px; padding-left: 5px; gap: 10px; }
.tree-row.selected { background: #c6d7ef; height: 31px; margin-top: 2.5px; margin-bottom: 2.5px; }
.folder { width: 21px; }

.mid {
  width: 486px;
  flex: none;
  margin-left: 8px;
  display: flex;
  flex-direction: column;
  border-left: 1px solid #c3c3c3;
  padding-bottom: 2px;
}
.panel-head {
  height: 24px;
  flex: none;
  background: #d6d7d9;
  display: flex;
  justify-content: flex-end;
  align-items: center;
  padding: 0 7px 4px 0;
}
.panel-head--prop { height: 18px; }
.panel-x { color: #777; font-size: 16px; line-height: 1; font-weight: 700; }
.list-panel {
  height: 389px;
  flex: none;
  display: flex;
  flex-direction: column;
  overflow: hidden;
  border-bottom: 2px solid #c8c8c8;
}
.list-tools { height: 72px; flex: none; border-top: 1px solid #ddd; text-align: right; color: #888; font-size: 12px; line-height: 14px; padding: 40px 2px 0 0; }
.list-search { height: 28px; flex: none; display: flex; justify-content: flex-end; align-items: center; padding-right: 9px; border-bottom: 1px solid #ddd; border-top: 1px solid #ddd; }
.search { width: 16px; height: 16px; display: block; }
.list-body { flex: 1; min-height: 0; position: relative; display: flex; flex-direction: column; justify-content: flex-end; }
.list-thumb {
  position: absolute; right: 7px; top: 21px;
  width: 13px; height: 199px; background: #c5c5c5; border-radius: 6px;
}
.list-stub { padding-left: 68px; }
.stub-bit { width: 38px; height: 2px; border-top: 2px dotted #333; }

.prop-panel {
  margin-top: 7px;
  flex: 1;
  min-height: 0;
  display: flex;
  flex-direction: column;
  overflow: hidden;
}
.tabs { height: 33px; flex: none; display: flex; background: #eeeeef; border-bottom: 1px solid #ddd; }
.tab { width: 96px; display: flex; align-items: center; justify-content: center; color: #999; background: #e0e0e1; border-right: 1px solid #cfcfcf; margin-top: 1px; padding-bottom: 4px; }
.tab--on { color: #333; background: #f2f2f3; margin-right: 2px; }
.prop-body { flex: 1; min-height: 0; display: flex; overflow: hidden; }
.prop-table { width: 465px; flex: none; }
.prop-row {
  display: grid;
  grid-template-columns: 33px 151px 208px;
  height: 31.5px;
  line-height: 28px;
  border-bottom: 2px solid #e2e2e2;
  white-space: nowrap;
}
.prop-row .c0 { background: #eeeeee; text-align: center; }
.prop-row .c1 { padding-left: 4px; border-right: 2px solid #e2e2e2; }
.prop-row .c2 { padding-left: 5px; border-right: 2px solid #e2e2e2; }
.prop-head { height: 30px; background: #eeeeee; grid-template-columns: 33px 151px 208px 73px; text-align: center; }
.prop-head .c0 { background: #fff; }
.prop-head .c1, .prop-head .c2 { text-align: center; padding-left: 0; }
.link { color: #3a6cf0; }
.locked { background: #e8e8e8; color: #999; }
.rebar { font-size: 16px; line-height: 0; margin-right: 1px; }
.prop-scroll { flex: 1; position: relative; display: flex; flex-direction: column; align-items: center; padding-right: 3px; }
.arrow-up { margin-top: 4px; width: 0; height: 0; border-left: 6px solid transparent; border-right: 6px solid transparent; border-bottom: 6px solid #333; }
.arrow-down { margin-top: auto; margin-bottom: 5px; width: 0; height: 0; border-left: 6px solid transparent; border-right: 6px solid transparent; border-top: 6px solid #333; }
.prop-thumb { width: 12px; height: 211px; margin-top: 5px; background: #c8c8c8; border-radius: 6px; }

.splitter { width: 6px; flex: none; background: #fff; }
.splitter-grip { margin-top: 316px; height: 150px; background: #666; }
.canvas { flex: 1; min-width: 0; }
.cad { display: block; width: 1151px; height: 782px; }

/* cad text */
.axis-text text { fill: #fff; font-family: "Liberation Sans", sans-serif; font-size: 30px; text-anchor: middle; }
.axis-text .t-edge { text-anchor: start; }
.t-label { fill: #a5a5a5; font-family: "Noto Sans CJK SC", sans-serif; font-size: 36px; }
.t-mag { fill: #d238c4; }
.t-yellow { fill: #ffff33; font-family: Roboto, "Liberation Sans", sans-serif; font-size: 58px; font-weight: 100; }
.t-grey { fill: #a5a5a5; font-family: "Liberation Sans", sans-serif; font-size: 36px; }
.t-teal { fill: none; stroke: #0aa0a5; stroke-width: 1px; font-family: "Liberation Sans", sans-serif; font-size: 58px; }
.t-teal--v { font-size: 56px; }
.t-green { fill: none; stroke: #29e629; stroke-width: 1px; font-family: "Liberation Sans", sans-serif; font-size: 50px; }
.t-purple { fill: none; stroke: #b742c4; stroke-width: 2px; font-family: "Liberation Sans", sans-serif; font-size: 36px; }
.t-3d { fill: #555; font-family: "Liberation Sans", sans-serif; font-size: 15px; }

/* status bar */
.status {
  height: 40px;
  flex: none;
  background: #dfdfe2;
  display: flex;
  align-items: flex-end;
  white-space: nowrap;
}
.st { height: 40px; line-height: 44px; flex: none; }
.st-k { margin-right: 16px; }
.st-xy { width: 307px; padding-left: 3px; word-spacing: 4px; letter-spacing: .2px; }
.st-h { width: 125px; }
.st-e { width: 201px; }
.st-f { width: 153px; }
.st-v { width: 121px; }
.st-msg { width: 425px; padding-left: 5px; }
.st-fps { width: 105px; }
.sb {
  height: 36px;
  margin: 0 5px 0 0;
  padding: 0;
  border: 2px solid #c2c2c4;
  border-bottom: 0;
  background: #d6d6d8;
  font: inherit;
  color: #333;
  display: flex;
  align-items: center;
  justify-content: center;
  gap: 9px;
  flex: none;
}
.sb-a { width: 36px; }
.sb-b { width: 54px; }
.sb-c { width: 53px; }
.sb-t1 { width: 108px; margin-right: 6px; }
.sb-t2 { width: 90px; margin-right: 0; }
.sb--on { background: #fff; border-color: #3d8de0; }
.sb-ic { width: 24px; height: 24px; display: block; }

/* badge */
.badge {
  position: absolute;
  left: 1890px;
  top: 77px;
  width: 96px;
  height: 96px;
  border-radius: 50%;
  background: #3eb155;
  border: 3px solid #d9dee0;
  color: #fff;
  font-size: 20px;
  padding: 32px 0 0 9px;
}

/* dialog */
.dialog {
  position: absolute;
  left: 0;
  top: 50px;
  width: 723px;
  height: 510px;
  background: #eeeeee;
  border: 1px solid #c5ccd4;
  border-top: 0;
  box-shadow: 5px 5px 5px rgba(0,0,0,.55);
  display: flex;
  flex-direction: column;
}
.dlg-title {
  height: 41px;
  flex: none;
  margin: 0 -1px;
  background: #2b7de0;
  color: #dfeafa;
  display: flex;
  justify-content: space-between;
  align-items: center;
  padding: 0 15px 3px 12px;
  line-height: 1;
}
.dlg-close { font-size: 22px; color: #fff; padding-bottom: 2px; }
.dlg-opts {
  height: 51px;
  flex: none;
  display: flex;
  align-items: center;
  gap: 11px;
  padding: 5px 0 0 19px;
  white-space: nowrap;
}
.radio {
  width: 20px;
  height: 21px;
  border-radius: 50%;
  background: #fff;
  border: 2px solid #bdbdbd;
  flex: none;
}
.radio--on { border-color: #bdbdbd; background: radial-gradient(circle, #3d8de0 0, #3d8de0 5px, #fff 6px); }
.check {
  width: 20px;
  height: 21px;
  border-radius: 3px;
  background: #3d8fe8;
  flex: none;
  position: relative;
}
.check::after {
  content: "";
  position: absolute;
  left: 7px;
  top: 3px;
  width: 6px;
  height: 12px;
  border: solid #fff;
  border-width: 0 2px 2px 0;
  transform: rotate(40deg);
}
.check--foot { margin-bottom: 3px; }
.dlg-table {
  height: 351px;
  margin: 0 17px 0 18px;
  flex: none;
  background: #fff;
  border: 1px solid #c8c8c8;
  display: flex;
  flex-direction: column;
}
.dt-head { height: 31px; flex: none; display: flex; background: #f1f1f1; width: 662px; border-bottom: 2px solid #d9d9d9; padding-bottom: 1px; }
.dh { display: flex; align-items: center; justify-content: center; border-right: 2px solid #d9d9d9; color: #555; }
.dh1 { width: 225px; }
.dh2 { width: 135px; }
.dh3 { width: 217px; }
.dt-body { flex: 1; min-height: 0; position: relative; }
.dt-rows { margin-top: -1px; }
.dt-row { height: 28.5px; display: flex; align-items: center; white-space: nowrap; padding-left: 4px; }
.d1 { width: 225px; letter-spacing: .3px; }
.d2 { width: 135px; }
.dt-thumb { position: absolute; right: 5px; top: 69px; width: 11px; height: 230px; background: #c8c8c8; border-radius: 6px; }
.dlg-foot { flex: 1; display: flex; align-items: center; padding: 0 17px 7px 19px; }
.foot-label { margin-left: 11px; margin-bottom: 3px; }
.btn-refresh {
  margin-left: auto;
  width: 120px;
  height: 39px;
  border: 0;
  border-radius: 3px;
  background: #2b7de0;
  color: #e6f0fc;
  font: inherit;
}
.grip { position: absolute; right: 5px; bottom: 5px; width: 12px; height: 12px; display: block; }
```
